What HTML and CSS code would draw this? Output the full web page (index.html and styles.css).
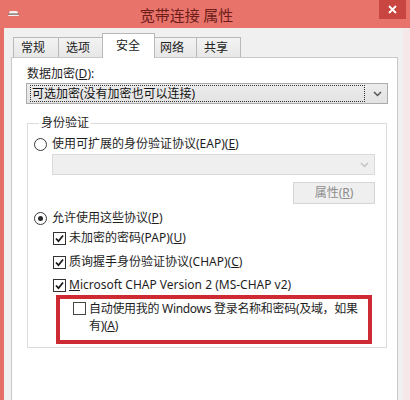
FILE: index.html
```html
<!DOCTYPE html>
<html lang="zh-CN">
<head>
<meta charset="utf-8">
<link rel="stylesheet" href="styles.css">
</head>
<body>
<div class="window">
  <div class="titlebar">
    <svg class="appicon" width="13" height="7" viewBox="0 0 13 7"><path d="M1 6 L2.5 1.5 Q3 1 4 1 L9 1 Q10 1 10.5 1.5 L12 6 Z" fill="#f4eeee"/><rect x="1" y="3.5" width="11" height="1.2" fill="#7a5a58"/></svg>
    <div class="title">宽带连接 属性</div>
    <div class="close"><svg width="9" height="9" viewBox="0 0 9 9"><path d="M1 1 L8 8 M8 1 L1 8" stroke="#fff" stroke-width="1.8"/></svg></div>
  </div>
  <div class="client">
    <div class="tabs">
      <div class="tab w45">常规</div>
      <div class="tab w46">选项</div>
      <div class="tab active">安全</div>
      <div class="tab w44">网络</div>
      <div class="tab w44">共享</div>
    </div>
    <div class="panel">
      <div class="label">数据加密(<u>D</u>):</div>
      <div class="combo">
        <div class="combo-text">可选加密(没有加密也可以连接)</div>
        <svg class="chev" width="9" height="6" viewBox="0 0 9 6"><path d="M1 1 L4.5 4.5 L8 1" fill="none" stroke="#555" stroke-width="1.5"/></svg>
      </div>
      <fieldset class="group">
        <legend>身份验证</legend>
        <div class="row first"><span class="radio"></span><span>使用可扩展的身份验证协议(EAP)(<u>E</u>)</span></div>
        <div class="combo disabled">
          <div class="combo-text"></div>
          <svg class="chev" width="9" height="6" viewBox="0 0 9 6"><path d="M1 1 L4.5 4.5 L8 1" fill="none" stroke="#c4c4c4" stroke-width="1.5"/></svg>
        </div>
        <div class="btnrow"><div class="button">属性(<u>R</u>)</div></div>
        <div class="row second"><span class="radio checked"></span><span>允许使用这些协议(<u>P</u>)</span></div>
        <div class="row cb r1"><span class="check on"><svg width="11" height="11" viewBox="0 0 11 11"><path d="M2 5.5 L4.5 8.2 L9 2.5" fill="none" stroke="#1a1a1a" stroke-width="1.8"/></svg></span><span>未加密的密码(PAP)(<u>U</u>)</span></div>
        <div class="row cb r2"><span class="check on"><svg width="11" height="11" viewBox="0 0 11 11"><path d="M2 5.5 L4.5 8.2 L9 2.5" fill="none" stroke="#1a1a1a" stroke-width="1.8"/></svg></span><span>质询握手身份验证协议(CHAP)(<u>C</u>)</span></div>
        <div class="row cb r3"><span class="check on"><svg width="11" height="11" viewBox="0 0 11 11"><path d="M2 5.5 L4.5 8.2 L9 2.5" fill="none" stroke="#1a1a1a" stroke-width="1.8"/></svg></span><span><u>M</u>icrosoft CHAP Version 2 (MS-CHAP v2)</span></div>
        <div class="highlight">
          <div class="hrow"><span class="check"></span><span class="htext">自动使用我的 Windows 登录名称和密码(及域，如果<br>有)(<u>A</u>)</span></div>
        </div>
      </fieldset>
    </div>
  </div>
</div>
</body>
</html>
```
FILE: styles.css
```css
html, body {
  margin: 0;
  padding: 0;
  width: 410px;
  height: 400px;
  overflow: hidden;
  background: #fff;
}
body {
  font-family: "Noto Sans", "Noto Sans CJK SC", sans-serif;
  font-size: 12px;
  color: #1e1e1e;
}
u { text-decoration: underline; text-underline-offset: 1px; }

.window {
  width: 410px;
  height: 400px;
  display: flex;
  flex-direction: column;
}
.titlebar {
  height: 28px;
  flex: none;
  background: #e8736b;
  display: flex;
  align-items: center;
}
.appicon { margin-left: 7px; margin-top: -1px; }
.title {
  flex: 1;
  text-align: center;
  font-family: "Noto Sans CJK SC", sans-serif;
  font-size: 15px;
  color: #6e1d19;
  margin-left: -20px;
  margin-right: 6px;
  padding-top: 1px;
}
.close {
  align-self: flex-start;
  width: 27px;
  height: 19px;
  background: #c8463f;
  margin-right: 4px;
  display: flex;
  align-items: center;
  justify-content: center;
}

.client {
  flex: 1;
  background: #f0f0f0;
  border-left: 4px solid #e36f66;
  border-right: 7px solid #f6e8e8;
  padding-top: 5px;
  display: flex;
  flex-direction: column;
  min-height: 0;
}
.tabs {
  display: flex;
  align-items: flex-end;
  padding-left: 9px;
  height: 24px;
  flex: none;
}
.tab {
  box-sizing: border-box;
  height: 20px;
  line-height: 18px;
  padding-left: 7px;
  border: 1px solid #b9b9b9;
  border-bottom: none;
  margin-right: -1px;
  background: linear-gradient(#f3f3f3, #e7e7e7);
  color: #222;
  font-family: "Noto Sans CJK SC", sans-serif;
}
.tab.w45 { width: 46px; }
.tab.w46 { width: 47px; }
.tab.w44 { width: 45px; }
.tab.active {
  width: 53px;
  height: 25px;
  line-height: 21px;
  padding-left: 13px;
  background: #fff;
  margin: 0 -3px -1px -2px;
  position: relative;
  z-index: 1;
}

.panel {
  flex: 1;
  margin: 0 5px 0 7px;
  border: 1px solid #c9c9c9;
  border-bottom: none;
  background: #fff;
  padding: 8px 9px 0 14px;
}
.label {
  line-height: 16px;
  padding-left: 1px;
}
.combo {
  margin-top: 1px;
  height: 19px;
  border: 1px solid #acacac;
  background: linear-gradient(#ececec, #e3e3e3);
  display: flex;
  align-items: center;
  padding: 0 5px 0 3px;
}
.combo-text {
  flex: 1;
  height: 15px;
  line-height: 15px;
  border: 1px dotted #333;
  padding-left: 1px;
  margin-right: 8px;
  color: #111;
}
.combo.disabled {
  margin: 2px 0 0 18px;
  background: #efefef;
  border-color: #dadada;
}
.combo.disabled .combo-text { border-color: transparent; }

.group {
  margin: 11px 1px 0 1px;
  border: 1px solid #dcdcdc;
  padding: 0 11px 3px 6px;
}
.group legend {
  margin-left: 5px;
  padding: 0 2px;
  line-height: 16px;
}
.row {
  display: flex;
  align-items: center;
  height: 16px;
  line-height: 16px;
  white-space: nowrap;
}
.row.first { margin-top: 5px; }
.row.second { margin-top: 6px; }
.row.cb { margin-left: 19px; }
.row.r1 { margin-top: 4px; }
.row.r2 { margin-top: 8px; }
.row.r3 { margin-top: 7px; }
.radio {
  width: 11px;
  height: 11px;
  border: 1px solid #3a3a3a;
  border-radius: 50%;
  background: #fff;
  margin-right: 5px;
  display: flex;
  align-items: center;
  justify-content: center;
  flex: none;
}
.radio.checked::after {
  content: "";
  width: 5px;
  height: 5px;
  border-radius: 50%;
  background: #2a2a2a;
}
.check {
  width: 11px;
  height: 11px;
  border: 1px solid #333;
  background: #fff;
  margin-right: 3px;
  flex: none;
  display: flex;
}
.btnrow {
  display: flex;
  justify-content: flex-end;
  margin-top: 7px;
}
.button {
  width: 80px;
  height: 20px;
  line-height: 20px;
  text-align: center;
  border: 1px solid #d5d5d5;
  background: #efefef;
  color: #8d8d8d;
}
.highlight {
  margin: 2px 3px 0 22px;
  border: 4px solid #cd2a33;
  padding: 1px 4px 6px 13px;
}
.hrow {
  display: flex;
  align-items: flex-start;
}
.hrow .check {
  border-color: #444;
  margin-top: 2px;
  margin-right: 3px;
}
.htext {
  line-height: 17px;
  white-space: nowrap;
  letter-spacing: -0.3px;
}
```
